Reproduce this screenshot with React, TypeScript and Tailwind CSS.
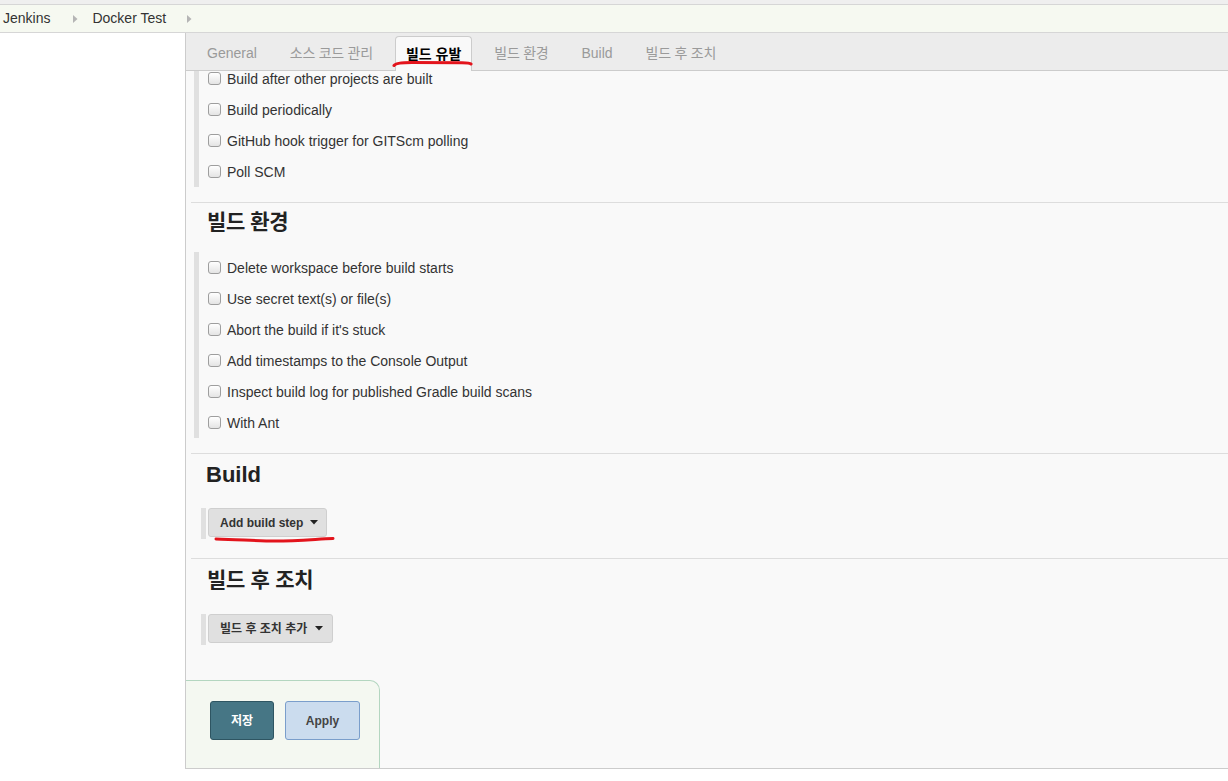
import React from "react";

const Checkbox = () => (
  <span className="inline-block w-[13px] h-[13px] rounded-[3px] border border-[#9e9e9e] bg-linear-to-b from-white to-[#e4e4e4] shrink-0" />
);

const Row = ({ label }: { label: string }) => (
  <div className="flex items-center h-[31px] pl-[9px]">
    <Checkbox />
    <span className="ml-[6px] text-[14px] text-[#333] leading-none">{label}</span>
  </div>
);

const Bar = ({ children }: { children: React.ReactNode }) => (
  <div className="ml-[8px] border-l-[5px] border-[#e0e0e0]">{children}</div>
);

const Sep = ({ mt }: { mt: string }) => <div className={`${mt} ml-[5px] border-t border-[#dddddd]`} />;

const Caret = () => (
  <svg width="8" height="5" viewBox="0 0 8 5" className="shrink-0">
    <path d="M0 0 L8 0 L4 4.5 Z" fill="#222" />
  </svg>
);

const Arrow = () => (
  <svg width="5" height="8" viewBox="0 0 5 8">
    <path d="M0 0 L4.5 4 L0 8 Z" fill="#b5b5b5" />
  </svg>
);

export default function App() {
  const tabs = ["General", "소스 코드 관리", "빌드 유발", "빌드 환경", "Build", "빌드 후 조치"];
  return (
    <div className="w-[1228px] h-[781px] bg-white overflow-hidden font-['Liberation_Sans','Noto_Sans_CJK_KR',sans-serif]">
      <div className="h-[5px] bg-[#efefef] border-b border-[#d6d6d6]" />
      <div className="h-[28px] bg-[#f6f9f1] border-b border-[#d6d6d6] flex items-center pl-[3px] text-[14px] text-[#333]">
        <span>Jenkins</span>
        <span className="ml-[23px] mr-[14px] flex items-center"><Arrow /></span>
        <span>Docker Test</span>
        <span className="ml-[21px] flex items-center"><Arrow /></span>
      </div>
      <div className="flex">
        <div className="w-[185px] shrink-0 bg-white" />
        <div className="flex-1 border-l border-b border-[#cccccc] bg-[#f9f9f9]">
          <div className="h-[38px] bg-[#ececec] border-b border-[#cccccc] flex items-end pl-[10px] gap-[11px]">
            {tabs.map((t) => {
              const active = t === "빌드 유발";
              const ko = /[가-힣]/.test(t);
              return active ? (
                <div
                  key={t}
                  className="relative h-[35px] -mb-px px-[10px] border border-b-0 border-[#cccccc] rounded-t-[4px] bg-[#f9f9f9] flex items-center text-[14px] font-bold text-black"
                >
                  {t}
                  <svg className="absolute left-[-4px] top-[22px]" width="84" height="9" viewBox="0 0 84 9">
                    <path d="M2 6.5 C 3 4.5, 8 3.5, 20 3.5 L 70 3.8 C 75 3.9, 78 4.2, 79 5" stroke="#e3141c" strokeWidth="3" fill="none" strokeLinecap="round" />
                  </svg>
                </div>
              ) : (
                <div
                  key={t}
                  className={`h-[34px] px-[11px] flex items-center text-[14px] text-[#9a9a9a] ${ko ? "tracking-[-0.25px]" : ""}`}
                >
                  {t}
                </div>
              );
            })}
          </div>
          <div className="overflow-hidden">
            <div className="-mt-[8px]">
              <Bar>
                <Row label="Build after other projects are built" />
                <Row label="Build periodically" />
                <Row label="GitHub hook trigger for GITScm polling" />
                <Row label="Poll SCM" />
              </Bar>
              <Sep mt="mt-[15px]" />
              <div className="pt-[5px] h-[33px] pl-[21px] text-[21px] leading-[28px] font-bold text-[#222] tracking-[-0.4px]">빌드 환경</div>
              <div className="h-[16px]" />
              <Bar>
                <Row label="Delete workspace before build starts" />
                <Row label="Use secret text(s) or file(s)" />
                <Row label="Abort the build if it's stuck" />
                <Row label="Add timestamps to the Console Output" />
                <Row label="Inspect build log for published Gradle build scans" />
                <Row label="With Ant" />
              </Bar>
              <Sep mt="mt-[15px]" />
              <div className="pt-[7px] h-[33px] pl-[20px] text-[22px] leading-[28px] font-bold text-[#222]">Build</div>
              <div className="h-[21px]" />
              <div className="relative ml-[15px] h-[31px] flex border-l-[5px] border-[#e0e0e0] pl-[2px]">
                <button className="h-[29px] pl-[11px] pr-[8px] flex items-center gap-[7px] bg-[#e0e0e0] border border-[#cfcfcf] rounded-[3px] text-[12px] font-bold text-[#333]">
                  Add build step
                  <Caret />
                </button>
                <svg className="absolute left-[7px] top-[26px]" width="124" height="9" viewBox="0 0 124 9">
                  <path d="M3 5 C 25 5.5, 45 7, 62 7 C 85 7, 105 5, 120 4.5" stroke="#e3141c" strokeWidth="3" fill="none" strokeLinecap="round" />
                </svg>
              </div>
              <Sep mt="mt-[19px]" />
              <div className="pt-[7px] h-[35px] pl-[21px] text-[21px] leading-[28px] font-bold text-[#222] tracking-[-0.3px]">빌드 후 조치</div>
              <div className="h-[20px]" />
              <div className="ml-[15px] h-[31px] flex border-l-[5px] border-[#e0e0e0] pl-[2px]">
                <button className="h-[29px] pl-[11px] pr-[9px] flex items-center gap-[8px] bg-[#e0e0e0] border border-[#cfcfcf] rounded-[3px] text-[12px] font-bold text-[#333]">
                  빌드 후 조치 추가
                  <Caret />
                </button>
              </div>
              <div className="h-[35px]" />
              <div className="w-[194px] h-[88px] bg-[#f4f8f1] border-t border-r border-[#b3d6c0] rounded-tr-[10px] pt-[20px] pl-[24px] flex gap-[11px] items-start">
                <button className="w-[64px] h-[39px] bg-[#467685] border border-[#2e5562] rounded-[3px] text-white text-[12px] font-bold">저장</button>
                <button className="w-[75px] h-[39px] bg-[#cbdcee] border border-[#7a9ecb] rounded-[3px] text-[#444] text-[12px] font-bold">Apply</button>
              </div>
            </div>
          </div>
        </div>
      </div>
    </div>
  );
}
